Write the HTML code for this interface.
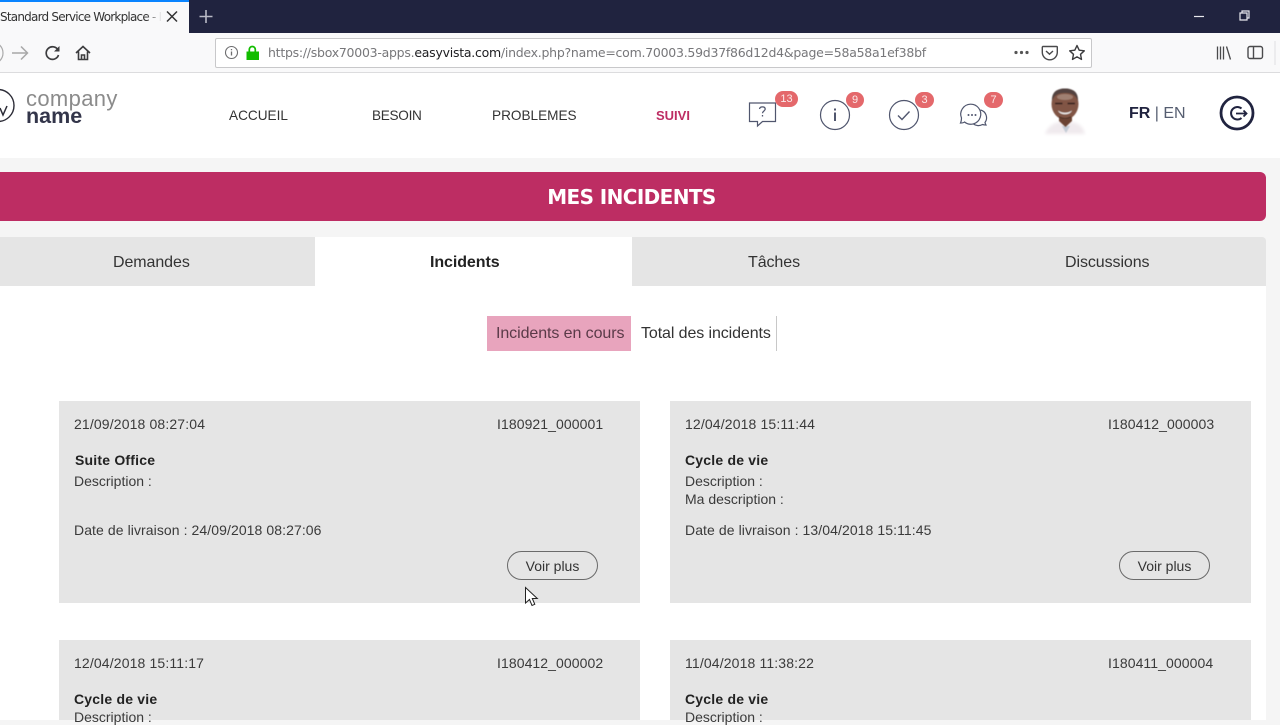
<!DOCTYPE html>
<html lang="fr"><head><meta charset="utf-8"><title>Mes incidents</title>
<style>
html,body{margin:0;padding:0;width:1280px;height:720px;overflow:hidden;background:#f5f5f5;font-family:"Liberation Sans",sans-serif;color:#333}
.a{position:absolute;white-space:nowrap}
.t{position:absolute;white-space:nowrap;font-size:14px;line-height:16px;color:#3a3a3a}
.d{letter-spacing:.14px}
.id{letter-spacing:.08px}
.l{letter-spacing:.08px}
.h{font-weight:bold;color:#222;letter-spacing:.2px}
.card{position:absolute;background:#e5e5e5}
.b{position:absolute;height:16px;border-radius:8px;background:#e4686b;color:#fbe9e9;font-size:11px;line-height:16px;text-align:center}
.btn{position:absolute;width:89px;height:27px;border:1.5px solid #6a6a6a;border-radius:15px;font-size:14px;line-height:29px;text-align:center;color:#333}
.n{position:absolute;white-space:nowrap;top:108px;font-size:13.6px;line-height:16px;color:#333}
.tab{position:absolute;white-space:nowrap;top:254px;font-size:16px;line-height:18px;color:#333;letter-spacing:-.08px}
</style></head><body>
<div class="a" style="left:0;top:0;width:1280px;height:33px;background:#20233f"></div>
<div class="a" style="left:0;top:0;width:189px;height:33px;background:#f9f9fa"></div>
<div class="a" style="left:0;top:0;width:189px;height:2px;background:#0a84ff"></div>
<div class="a" style="left:0;top:10px;width:161px;overflow:hidden;font-size:12px;line-height:15px;color:#333;font-family:'DejaVu Sans',sans-serif;letter-spacing:-.78px">Standard Service Workplace - D</div>
<div class="a" style="left:146px;top:8px;width:16px;height:20px;background:linear-gradient(90deg,rgba(249,249,250,0),#f9f9fa)"></div>
<svg class="a" style="left:0;top:0" width="1280" height="73" fill="none">
<path d="M167 11.500l10 10M177 11.500l-10 10" stroke="#333" stroke-width="1.500"/>
<path d="M206 10v13M199.500 16.500h13" stroke="#b9bac6" stroke-width="1.600"/>
<path d="M1194 16.500h10" stroke="#e8e8ee" stroke-width="1.200"/>
<path d="M1240 13h7v7h-7zM1242 13v-2h7v7h-2" stroke="#e8e8ee" stroke-width="1.200"/>
</svg>
<div class="a" style="left:0;top:33px;width:1280px;height:40px;background:#f9f9fa"></div>
<div class="a" style="left:0;top:72px;width:1280px;height:1px;background:#dcdcde"></div>
<div class="a" style="left:215px;top:38px;width:875px;height:28px;background:#fff;border:1px solid #c8c8ca;border-radius:2px"></div>
<svg class="a" style="left:0;top:33px" width="1280" height="40" fill="none">
<circle cx="-8" cy="20" r="11" stroke="#aaa" stroke-width="1.200"/>
<path d="M12 20h15M21 13.500l6.500 6.500-6.500 6.500" stroke="#a8a8a8" stroke-width="1.500"/>
<path d="M58 17a6.300 6.300 0 1 0 .5 5" stroke="#3c3c3e" stroke-width="1.700"/>
<path d="M59.500 13v5.500H54z" fill="#3c3c3e"/>
<path d="M76 20l7-6.500 7 6.500M78.500 18.500V26.500h9V18.500M81.500 26.500v-4.500h3v4.500" stroke="#3c3c3e" stroke-width="1.600"/>
<circle cx="231.500" cy="19.500" r="6" stroke="#6d6d6f" stroke-width="1.100"/>
<path d="M231.500 18.500v4M231.500 16v1.300" stroke="#6d6d6f" stroke-width="1.300"/>
<path d="M247 19h11.500v7.500H247z" fill="#12bc00" stroke="#12bc00"/>
<path d="M249.300 19v-2.500a3 3 0 0 1 6 0V19" stroke="#12bc00" stroke-width="1.700"/>
<circle cx="1016" cy="19.500" r="1.600" fill="#555"/><circle cx="1021.500" cy="19.500" r="1.600" fill="#555"/><circle cx="1027" cy="19.500" r="1.600" fill="#555"/>
<path d="M1042.500 13.500h14a.8.8 0 0 1 .8.8v5a7.500 7.500 0 0 1-15 0v-5a.8.8 0 0 1 .8-.8z" stroke="#4a4a4c" stroke-width="1.400"/>
<path d="M1046 18l3.500 3.200 3.500-3.200" stroke="#4a4a4c" stroke-width="1.400"/>
<path d="M1077 12.500l2.200 4.700 5.100.6-3.800 3.500 1 5.100-4.500-2.600-4.500 2.600 1-5.100-3.800-3.500 5.100-.6z" stroke="#3c3c3e" stroke-width="1.400" stroke-linejoin="round"/>
<path d="M1217.500 13.500v13M1220.500 13.500v13M1223.500 13.500v13M1226.500 13.500l4 13" stroke="#4a4a4c" stroke-width="1.300"/>
<rect x="1248" y="13.500" width="14.500" height="12" rx="2" stroke="#4a4a4c" stroke-width="1.400"/>
<path d="M1253.500 13.500v12" stroke="#4a4a4c" stroke-width="1.400"/>
<path d="M1275 8v24" stroke="#e0e0e2"/>
</svg>
<div class="a" style="left:268px;top:45px;font-family:'DejaVu Sans',sans-serif;font-size:12.500px;line-height:16px;letter-spacing:-.255px;color:#77777a">https://sbox70003-apps.<span style="color:#1d1d20">easyvista.com</span>/index.php?name=com.70003.59d37f86d12d4&amp;page=58a58a1ef38bf</div>

<div class="a" style="left:0;top:73px;width:1280px;height:85px;background:#fff"></div>
<svg class="a" style="left:0;top:85px" width="30" height="45" fill="none"><circle cx="-2" cy="20.500" r="16" stroke="#2b2b36" stroke-width="1.400"/><path d="M0 23l3 7 4-9" stroke="#2b2b36" stroke-width="1.500"/></svg>
<div class="a" style="left:26px;top:87px;font-size:22px;line-height:24px;color:#8b8b8b;letter-spacing:.35px">company</div>
<div class="a" style="left:26px;top:104px;font-size:21.500px;line-height:24px;font-weight:bold;color:#33354a">name</div>
<div class="n" style="left:229px">ACCUEIL</div>
<div class="n" style="left:372px;letter-spacing:-.3px">BESOIN</div>
<div class="n" style="left:492px">PROBLEMES</div>
<div class="n" style="left:656px;font-size:13px;font-weight:bold;color:#bd2d63">SUIVI</div>
<svg class="a" style="left:740px;top:90px" width="260" height="50" fill="none" stroke="#50566e" stroke-width="1.200">
<path d="M9.500 13h26v18.500h-13l-5 4.500v-4.500h-8z"/>
<path d="M19.500 19c.5-2.800 5.500-2.800 5.700 0 .1 2-2.700 2-2.700 4.300M22.500 25v1.500" stroke-width="1.300"/>
<circle cx="95" cy="25" r="14.500"/>
<path d="M95 22.500v8.500M95 18.500v2" stroke-width="2"/>
<circle cx="164" cy="25" r="14.500"/>
<path d="M158 25.500l4 4 7.500-8" stroke-width="1.400"/>
<g transform="translate(-1.500 0)">
<path d="M222 33c3 0 4-1 4-1a10 10 0 1 0-3-4c0 2-.5 4-1 5z"/>
<path d="M242 20a8 8 0 0 1 4.500 12.500c0 .5.500 1.500 1 2.500-2 0-3.500-.5-3.500-.5a8 8 0 0 1-9-.5"/>
<circle cx="230" cy="25" r="1" fill="#50566e" stroke="none"/><circle cx="233.500" cy="25" r="1" fill="#50566e" stroke="none"/><circle cx="237" cy="25" r="1" fill="#50566e" stroke="none"/>
</g>
</svg>
<div class="b" style="left:775px;top:91px;width:23px">13</div>
<div class="b" style="left:846px;top:92px;width:18px">9</div>
<div class="b" style="left:915px;top:92px;width:19px">3</div>
<div class="b" style="left:984px;top:92px;width:19px">7</div>
<svg class="a" style="left:1040px;top:84px" width="50" height="54">
<defs><filter id="s" x="-20%" y="-20%" width="140%" height="140%"><feGaussianBlur stdDeviation=".6"/></filter>
<filter id="w" x="-20%" y="-20%" width="140%" height="140%"><feGaussianBlur stdDeviation="1.500"/></filter></defs>
<path d="M5 50c3-8 9-11 14-12h13c6 1 11 4 13 12z" fill="#f0eaee" filter="url(#w)"/>
<path d="M22 42l4 7 4-7z" fill="#c4ccd6" filter="url(#s)"/>
<g filter="url(#s)">
<path d="M19 30h13v7l-6.500 6-6.500-6z" fill="#6a4233"/>
<ellipse cx="25" cy="20" rx="13.500" ry="15.500" fill="#815544"/>
<path d="M12 17c-.5-9 5-12.500 13-12.500S38.500 8 38 17c-2-5-5-8-13-8s-11 3-13 8z" fill="#52423f"/>
<ellipse cx="25" cy="13" rx="8" ry="3" fill="#a08072"/>
<path d="M15 19.500h7.500M27.500 19.500H35" stroke="#2e1d1a" stroke-width="1.500"/>
<path d="M18 26.500c4 3 10 3 14 0-2 5-12 5-14 0z" fill="#f2f2f2"/>
<path d="M19 33c4 2 8 2 12 0" stroke="#4e3228" stroke-width="1.300" fill="none"/>
</g>
</svg>
<div class="a" style="left:1129px;top:104px;font-size:16px;line-height:19px;color:#555d70"><b style="color:#20233f">FR</b> | EN</div>
<svg class="a" style="left:1218px;top:94px" width="38" height="38" fill="none" stroke="#20233f">
<circle cx="19" cy="19" r="16" stroke-width="2.800"/>
<path d="M23.500 14.500a6.300 6.300 0 1 0 0 9.500" stroke-width="2"/>
<path d="M18 19.500h10.500M25.500 16.500l3 3-3 3" stroke-width="1.800"/>
</svg>

<div class="a" style="left:0;top:172px;width:1266px;height:49px;background:#bd2d63;border-radius:0 6px 6px 0;color:#fff;font-size:20px;line-height:50px;font-weight:bold;text-align:center;font-family:'DejaVu Sans','Liberation Sans',sans-serif;letter-spacing:-.6px;text-indent:-3px">MES INCIDENTS</div>
<div class="a" style="left:0;top:237px;width:1266px;height:49px;background:#e5e5e5;border-radius:0 4px 0 0"></div>
<div class="a" style="left:0;top:286px;width:1266px;height:434px;background:#fff"></div>
<div class="a" style="left:315px;top:237px;width:317px;height:49px;background:#fff"></div>
<div class="tab" style="left:113px">Demandes</div>
<div class="tab" style="left:430px;font-weight:bold;color:#222">Incidents</div>
<div class="tab" style="left:748px">Tâches</div>
<div class="tab" style="left:1065px">Discussions</div>

<div class="a" style="left:487px;top:316px;width:144px;height:35px;background:#e8a4bd"></div>
<div class="a" style="left:776px;top:316px;width:1px;height:35px;background:#c8c8c8"></div>
<div class="a" style="left:496px;top:325px;font-size:16px;line-height:18px;letter-spacing:-.08px;color:#5a3a48">Incidents en cours</div>
<div class="a" style="left:641px;top:325px;font-size:16px;line-height:18px;letter-spacing:-.1px;color:#333">Total des incidents</div>

<div class="card" style="left:59px;top:401px;width:581px;height:202px"></div>
<div class="card" style="left:670px;top:401px;width:581px;height:202px"></div>
<div class="card" style="left:59px;top:640px;width:581px;height:80px"></div>
<div class="card" style="left:670px;top:640px;width:581px;height:80px"></div>

<div class="t d" style="left:74px;top:416px">21/09/2018 08:27:04</div>
<div class="t id" style="left:497px;top:416px">I180921_000001</div>
<div class="t h" style="left:75px;top:452px">Suite Office</div>
<div class="t" style="left:74px;top:473px">Description :</div>
<div class="t l" style="left:74px;top:522px">Date de livraison : 24/09/2018 08:27:06</div>
<div class="btn" style="left:507px;top:551px">Voir plus</div>

<div class="t d" style="left:685px;top:416px">12/04/2018 15:11:44</div>
<div class="t id" style="left:1108px;top:416px">I180412_000003</div>
<div class="t h" style="left:685px;top:452px">Cycle de vie</div>
<div class="t" style="left:685px;top:473px">Description :</div>
<div class="t" style="left:685px;top:491px">Ma description :</div>
<div class="t l" style="left:685px;top:522px">Date de livraison : 13/04/2018 15:11:45</div>
<div class="btn" style="left:1119px;top:551px">Voir plus</div>

<div class="t d" style="left:74px;top:655px">12/04/2018 15:11:17</div>
<div class="t id" style="left:497px;top:655px">I180412_000002</div>
<div class="t h" style="left:74px;top:691px">Cycle de vie</div>
<div class="t" style="left:74px;top:709px">Description :</div>

<div class="t d" style="left:685px;top:655px">11/04/2018 11:38:22</div>
<div class="t id" style="left:1108px;top:655px">I180411_000004</div>
<div class="t h" style="left:685px;top:691px">Cycle de vie</div>
<div class="t" style="left:685px;top:709px">Description :</div>

<svg class="a" style="left:524px;top:586px" width="16" height="22"><path d="M1.500 1.500v15.500l4-3.500 2.500 6 2.800-1.200-2.500-5.800h5z" fill="#fff" stroke="#222" stroke-width="1"/></svg>
</body></html>
